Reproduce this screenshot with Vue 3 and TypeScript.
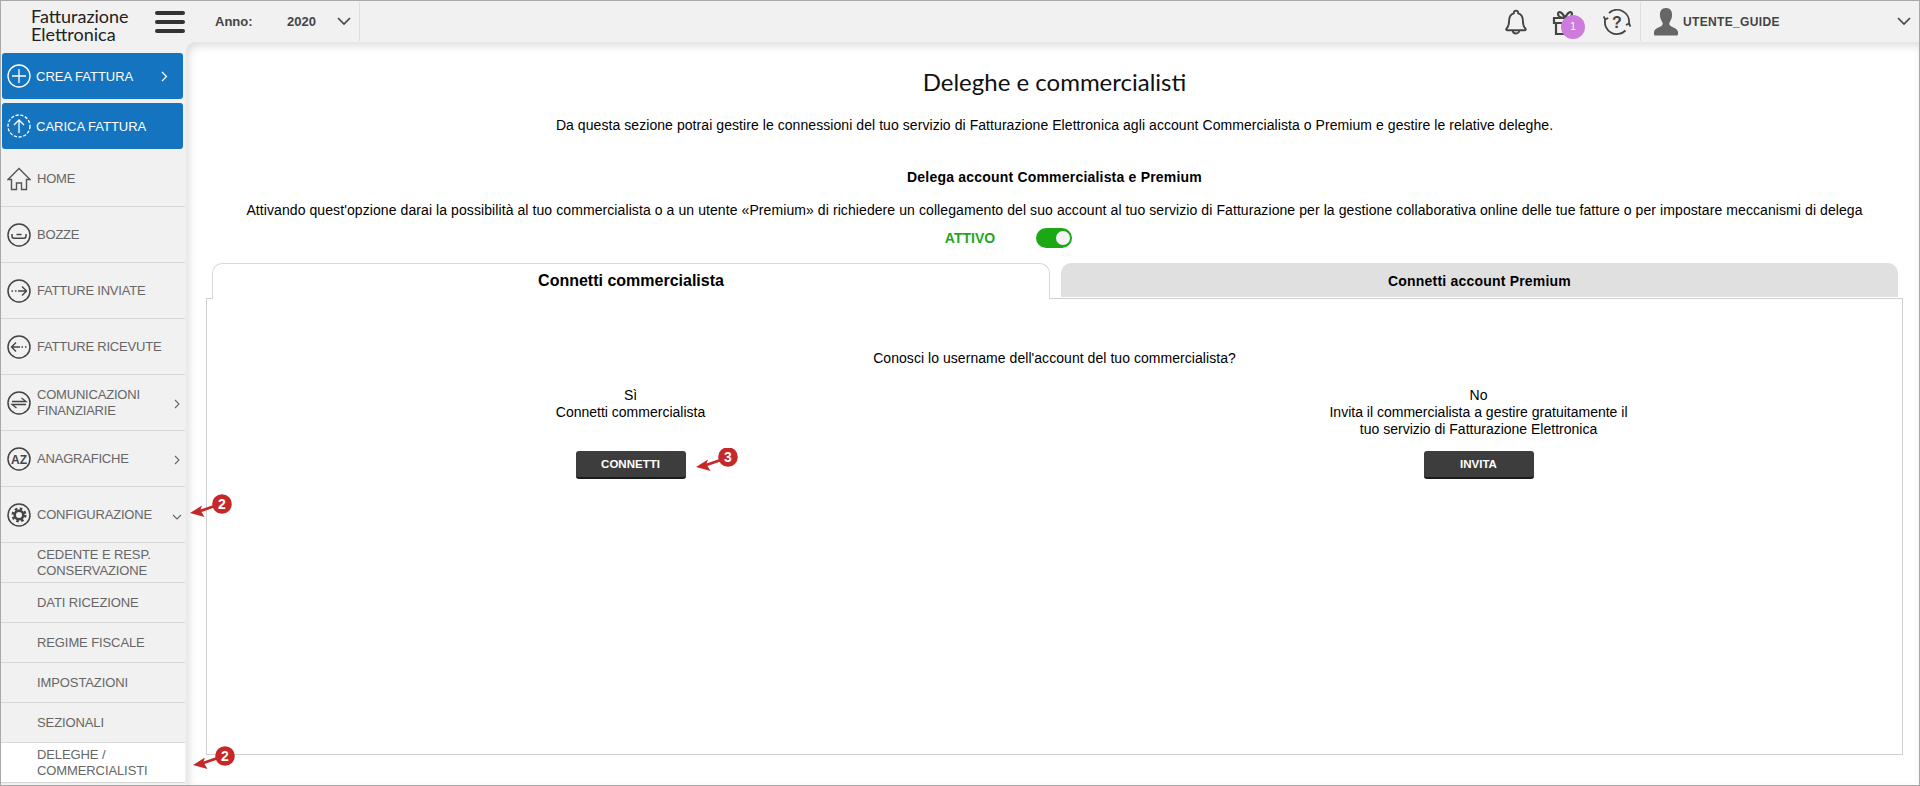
<script setup lang="ts">
interface NavItem { label: string[]; icon: string; arrow?: string }
const items: NavItem[] = [
  { label: ['HOME'], icon: 'home' },
  { label: ['BOZZE'], icon: 'draft' },
  { label: ['FATTURE INVIATE'], icon: 'out' },
  { label: ['FATTURE RICEVUTE'], icon: 'in' },
  { label: ['COMUNICAZIONI', 'FINANZIARIE'], icon: 'swap', arrow: 'right' },
  { label: ['ANAGRAFICHE'], icon: 'az', arrow: 'right' },
  { label: ['CONFIGURAZIONE'], icon: 'gear', arrow: 'down' },
]
const subs: string[][] = [
  ['CEDENTE E RESP.', 'CONSERVAZIONE'],
  ['DATI RICEZIONE'],
  ['REGIME FISCALE'],
  ['IMPOSTAZIONI'],
  ['SEZIONALI'],
  ['DELEGHE /', 'COMMERCIALISTI'],
]
</script>

<template>
  <div class="page">
    <header class="top">
      <div class="logo"><span>Fatturazione</span><span>Elettronica</span></div>
      <svg class="burger" width="30" height="24" viewBox="0 0 30 24"><path d="M2 3h26M2 12h26M2 21h26" stroke="#333" stroke-width="4" stroke-linecap="round" /></svg>
      <div class="year">
        <span class="anno">Anno:</span>
        <span class="val">2020</span>
        <svg width="14" height="9" viewBox="0 0 14 9"><path d="M1 1l6 6 6-6" fill="none" stroke="#444" stroke-width="1.6" /></svg>
      </div>
      <div class="spacer"></div>
      <svg class="bell" width="22" height="30" viewBox="0 0 24 30"><path d="M12 2.500a2.500 2.500 0 0 1 2.400 3c3.600 1 5.100 4.500 5.100 8.200 0 4.500.8 6.500 3 8.800.5.700 0 1.500-1 1.500H2.500c-1 0-1.500-.8-1-1.500 2.200-2.300 3-4.300 3-8.800 0-3.700 1.500-7.200 5.100-8.200a2.500 2.500 0 0 1 2.400-3z" fill="none" stroke="#444" stroke-width="2" /><path d="M8.500 24.500a3.500 3 0 0 0 7 0" fill="none" stroke="#444" stroke-width="2" /></svg>
      <div class="gift">
        <svg width="26" height="28" viewBox="0 0 26 28"><path d="M2 10h22v5H2zM4 15v11h18V15M13 10v16M13 10c-4 0-7-1-7-4s4-3 7 4c3-7 7-7 7-4s-3 4-7 4z" fill="none" stroke="#444" stroke-width="2.200" /></svg>
        <span class="badge">1</span>
      </div>
      <svg class="help" width="28" height="28" viewBox="0 0 28 28"><path d="M6 5A12 12 0 0 1 26 15.500M22.500 22.500A12 12 0 0 1 2.200 11.500M2.200 11.500l-1.500-3M2.200 11.500l3-1.500M26 15.500l1.500 3M26 15.500l-3 1.500" fill="none" stroke="#444" stroke-width="1.800" /><text x="14" y="20" text-anchor="middle" class="q">?</text></svg>
      <div class="user">
        <svg width="26" height="30" viewBox="0 0 26 30"><path d="M13 1c4.500 0 6.500 3.500 6 8-.3 3-1.500 5-2.500 6.500-.5 1.500 0 3 2 4 2.500 1.200 6 2.500 6.500 5.500.2 1.500 0 3.500-1 3.500H2c-1 0-1.200-2-1-3.500.5-3 4-4.300 6.500-5.500 2-1 2.500-2.500 2-4C8.500 14 7.300 12 7 9c-.5-4.500 1.500-8 6-8z" fill="#666" /></svg>
        <span class="uname">UTENTE_GUIDE</span>
        <svg class="uchev" width="14" height="9" viewBox="0 0 14 9"><path d="M1 1l6 6 6-6" fill="none" stroke="#444" stroke-width="1.600" /></svg>
      </div>
    </header>

    <div class="body">
      <aside class="side">
        <div class="cta">
          <svg width="24" height="24" viewBox="0 0 24 24"><circle cx="12" cy="12" r="11" fill="none" stroke="#fff" stroke-width="1.300" /><path d="M12 5v14M5 12h14" stroke="#fff" stroke-width="1.300" /></svg>
          <span>CREA FATTURA</span>
          <svg class="ctachev" width="7" height="11" viewBox="0 0 7 11"><path d="M1 1l4.500 4.500L1 10" fill="none" stroke="#fff" stroke-width="1.300" /></svg>
        </div>
        <div class="cta last">
          <svg width="24" height="24" viewBox="0 0 24 24"><circle cx="12" cy="12" r="11" fill="none" stroke="#fff" stroke-width="1.300" stroke-dasharray="3.200 1.600" /><path d="M12 19V6M7 11l5-5 5 5" fill="none" stroke="#fff" stroke-width="1.300" /></svg>
          <span>CARICA FATTURA</span>
        </div>
        <div v-for="it in items" :key="it.icon" class="row">
          <svg class="ricon" width="24" height="24" viewBox="0 0 24 24">
            <template v-if="it.icon === 'home'">
              <path d="M1 12.500L12 1.500l11 11h-3.500v10h-5v-6.500h-5v6.500h-5v-10z" fill="none" stroke="#555" stroke-width="1.400" />
            </template>
            <template v-else>
              <circle cx="12" cy="12" r="11" fill="none" stroke="#444" stroke-width="1.500" />
              <path v-if="it.icon === 'draft'" d="M5 11v2c0 1.500.8 2.200 2 2.200h10c1.200 0 2-.7 2-2.200v-2M9.500 11.500h5" fill="none" stroke="#444" stroke-width="1.500" />
              <path v-else-if="it.icon === 'out'" d="M4.500 12h1.500M8 12h1.500M11 12h8M15 7.500l4.500 4.500-4.500 4.500" fill="none" stroke="#444" stroke-width="1.400" />
              <path v-else-if="it.icon === 'in'" d="M19.500 12H18M16 12h-1.500M13 12H5M9 7.500L4.500 12 9 16.500" fill="none" stroke="#444" stroke-width="1.400" />
              <path v-else-if="it.icon === 'swap'" d="M5 10.500h14l-4.500-3.500M19 13.500H5l4.500 3.500" fill="none" stroke="#444" stroke-width="1.300" />
              <text v-else-if="it.icon === 'az'" x="12" y="16.500" text-anchor="middle" class="az">AZ</text>
              <template v-else-if="it.icon === 'gear'">
                <circle cx="12" cy="12" r="4.300" fill="none" stroke="#444" stroke-width="2.600" />
                <circle cx="12" cy="12" r="6.300" fill="none" stroke="#444" stroke-width="2.400" stroke-dasharray="2.500 2.450" />
              </template>
            </template>
          </svg>
          <span class="lbl"><template v-for="(l, i) in it.label" :key="l">{{ l }}<br v-if="i < it.label.length - 1" /></template></span>
          <svg v-if="it.arrow === 'right'" class="rchev" width="6" height="10" viewBox="0 0 6 10"><path d="M1 1l4 4-4 4" fill="none" stroke="#666" stroke-width="1.100" /></svg>
          <svg v-if="it.arrow === 'down'" class="rchev down" width="10" height="6" viewBox="0 0 10 6"><path d="M1 1l4 4 4-4" fill="none" stroke="#666" stroke-width="1.100" /></svg>
        </div>
        <div v-for="(s, n) in subs" :key="s[0]" class="sub" :class="{ on: n === subs.length - 1 }">
          <span class="lbl"><template v-for="(l, i) in s" :key="l">{{ l }}<br v-if="i < s.length - 1" /></template></span>
        </div>
      </aside>

      <main class="main">
        <h1>Deleghe e commercialisti</h1>
        <p class="intro">Da questa sezione potrai gestire le connessioni del tuo servizio di Fatturazione Elettronica agli account Commercialista o Premium e gestire le relative deleghe.</p>
        <p class="dtitle">Delega account Commercialista e Premium</p>
        <p class="dtext">Attivando quest'opzione darai la possibilità al tuo commercialista o a un utente «Premium» di richiedere un collegamento del suo account al tuo servizio di Fatturazione per la gestione collaborativa online delle tue fatture o per impostare meccanismi di delega</p>
        <div class="toggle-row">
          <span class="attivo">ATTIVO</span>
          <span class="toggle"><span class="knob"></span></span>
        </div>
        <div class="tabs">
          <div class="tab active">Connetti commercialista</div>
          <div class="tab">Connetti account Premium</div>
        </div>
        <section class="panel">
          <p class="q1">Conosci lo username dell'account del tuo commercialista?</p>
          <div class="cols">
            <div class="col">
              <p class="ct">Sì<br />Connetti commercialista<br />&nbsp;</p>
              <div class="btn-wrap">
                <button class="btn">CONNETTI</button>
                <svg class="arrow a3" width="48" height="26" viewBox="0 0 48 26"><path d="M2 19l12-7.500-1.500 4 13-4.500 1 2.500-13 4.500 3 5z" fill="#c62828" /><circle cx="34" cy="9" r="9.800" fill="#c62828" /><text x="34" y="14" text-anchor="middle" class="num">3</text></svg>
              </div>
            </div>
            <div class="col second">
              <p class="ct">No<br />Invita il commercialista a gestire gratuitamente il<br />tuo servizio di Fatturazione Elettronica</p>
              <div class="btn-wrap"><button class="btn">INVITA</button></div>
            </div>
          </div>
        </section>
      </main>

      <svg class="arrow a2a" width="46" height="28" viewBox="0 0 46 28"><path d="M2 19l12-7.500-1.500 4 13-4.500 1 2.500-13 4.500 3 5z" fill="#c62828" /><circle cx="34" cy="10" r="9.800" fill="#c62828" /><text x="34" y="15" text-anchor="middle" class="num">2</text></svg>
      <svg class="arrow a2b" width="46" height="28" viewBox="0 0 46 28"><path d="M2 19l12-7.500-1.500 4 13-4.500 1 2.500-13 4.500 3 5z" fill="#c62828" /><circle cx="34" cy="10" r="9.800" fill="#c62828" /><text x="34" y="15" text-anchor="middle" class="num">2</text></svg>
    </div>
  </div>
</template>

<style>
html, body { margin: 0; padding: 0; background: #fff; }
</style>

<style scoped>
.page {
  width: 1920px; height: 786px; box-sizing: border-box; border: 1px solid #a9a9a9; overflow: hidden;
  background: #f1f1f1; font-family: "Liberation Sans", Arial, sans-serif; display: flex; flex-direction: column;
}
.top { height: 41px; flex: none; display: flex; align-items: center; background: #f1f1f1; }
.logo { width: 154px; box-sizing: border-box; padding: 7px 0 0 30px; align-self: flex-start; font: 400 18px/17.500px "Lato", sans-serif; color: #222; }
.logo span { display: block; height: 17.500px; }
.year { display: flex; align-items: center; height: 39px; margin-left: 30px; padding-right: 8px; border-right: 1px solid #ddd; font-size: 13px; font-weight: 700; color: #444; }
.anno { width: 72px; }
.val { width: 50px; }
.spacer { flex: 1; }
.bell { margin-right: 25px; }
.gift { position: relative; width: 26px; height: 28px; margin-right: 25px; }
.badge { position: absolute; left: 9px; top: 7px; width: 24px; height: 24px; border-radius: 50%; background: #cd7bdc; color: #fff; font-size: 10px; line-height: 24px; text-align: center; }
.q { font: 700 16px "Liberation Sans", sans-serif; fill: #444; }
.help { margin-right: 9px; }
.user { width: 279px; height: 39px; flex: none; border-left: 1px solid #ddd; box-sizing: border-box; padding-left: 12px; display: flex; align-items: center; gap: 4px; position: relative; }
.uname { font-size: 12px; font-weight: 700; color: #444; letter-spacing: .35px; }
.uchev { position: absolute; right: 8px; top: 15px; }
.body { flex: 1; display: flex; position: relative; min-height: 0; }
.side { width: 185px; flex: none; padding-top: 11px; box-sizing: border-box; }
.cta { height: 46px; margin: 0 0 4px 1px; width: 181px; box-sizing: border-box; background: #1474c0; border-radius: 3px; color: #fff; font-size: 13px; display: flex; align-items: center; gap: 5px; padding-left: 5px; position: relative; }
.cta.last { margin-bottom: 2px; }
.ctachev { position: absolute; left: 159px; top: 18px; }
.row { width: 178px; height: 55px; border-bottom: 1px solid #d8d8d8; display: flex; align-items: center; padding-left: 6px; gap: 6px; color: #666; font-size: 13px; line-height: 16px; position: relative; }
.lbl { display: block; letter-spacing: -.1px; }
.row .lbl { letter-spacing: -.2px; }
.ricon { flex: none; }
.rchev { position: absolute; right: 5px; top: 24px; }
.rchev.down { right: 3px; top: 27px; }
.sub { height: 39px; width: 148px; border-bottom: 1px solid #d8d8d8; display: flex; align-items: center; padding-left: 36px; color: #666; font-size: 13px; line-height: 16px; }
.sub.on { background: #fff; }
.main { flex: 1; background: #fff; border-radius: 9px 0 0 0; box-shadow: inset 3px 4px 8px rgba(0,0,0,.13); padding: 0 16px 0 20px; text-align: center; color: #000; min-width: 0; }
h1 { margin: 25px 0 0; font: 400 24px/30px "Lato", sans-serif; color: #111; }
.intro { margin: 20px 0 0; font-size: 14px; line-height: 16px; letter-spacing: .065px; }
.dtitle { margin: 36px 0 0; font-size: 14px; line-height: 16px; font-weight: 700; letter-spacing: .2px; }
.dtext { margin: 17px -10px 0; font-size: 14px; line-height: 16px; white-space: nowrap; letter-spacing: .085px; }
.toggle-row { display: flex; justify-content: center; align-items: center; gap: 41px; height: 20px; margin-top: 10px; padding-right: 92px; }
.attivo { color: #1ea71e; font-weight: 700; font-size: 14px; }
.toggle { width: 36px; height: 20px; border-radius: 10px; background: #1ca814; position: relative; }
.knob { position: absolute; right: 2px; top: 3px; width: 14px; height: 14px; border-radius: 50%; background: #f4f4f4; }
.tabs { display: flex; margin: 15px 0 0 6px; gap: 11px; height: 35px; width: 1686px; }
.tab { flex: none; width: 837px; box-sizing: border-box; font-weight: 700; font-size: 14px; line-height: 37px; letter-spacing: .2px; background: #e0e0e0; border-radius: 10px 10px 0 0; height: 34px; }
.tab.active { width: 838px; background: #fff; border: 1px solid #d8d8d8; border-bottom: 0; font-size: 16px; letter-spacing: 0; position: relative; height: 36px; line-height: 33px; z-index: 1; color: #000; }
.panel { width: 1697px; height: 457px; box-sizing: border-box; border: 1px solid #d0d0d0; position: relative; padding-top: 51px; }
.q1 { margin: 0; font-size: 14px; line-height: 16px; letter-spacing: .05px; }
.cols { display: flex; margin-top: 21px; }
.col { width: 848px; }
.col.second { padding-left: 1px; }
.ct { margin: 0; font-size: 14px; line-height: 17px; }
.btn-wrap { position: relative; margin-top: 13px; display: inline-block; }
.btn { display: block; height: 28px; width: 110px; border: 0; border-bottom: 2px solid #1b1b1b; border-radius: 3px; background: #3d3d3d; color: #fff; font: 700 11.500px "Liberation Sans", sans-serif; padding: 0; }
.arrow { position: absolute; }
.a3 { left: 118px; top: -3px; }
.a2a { left: 187px; top: 452px; }
.a2b { left: 190px; top: 704px; }
.num { font: 700 14px "Liberation Sans", sans-serif; fill: #fff; }
.az { font: 700 12px "Liberation Sans", sans-serif; fill: #444; }
</style>
